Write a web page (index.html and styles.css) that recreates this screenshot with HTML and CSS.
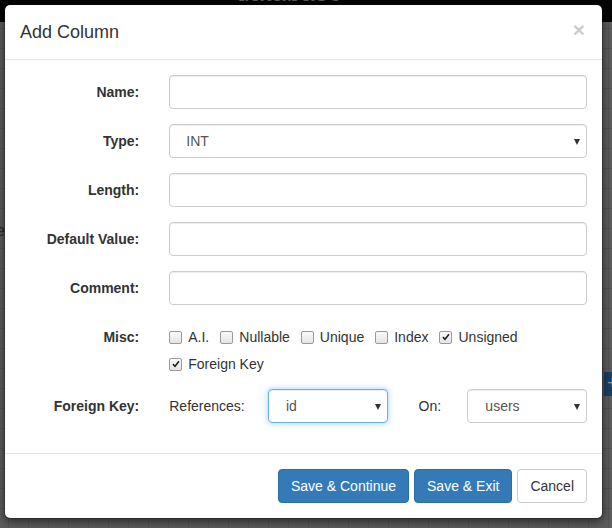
FILE: index.html
```html
<!DOCTYPE html>
<html>
<head>
<meta charset="utf-8">
<link rel="stylesheet" href="styles.css">
</head>
<body>
<div class="page">
  <div class="navbar"><span class="brand">database</span></div>
  <div class="canvas">
    <span class="side-char">e</span>
    <div class="add-btn">+</div>
  </div>
</div>

<div class="modal">
  <div class="modal-header">
    <h4 class="modal-title">Add Column</h4>
    <span class="close">×</span>
  </div>
  <div class="modal-body">
    <div class="form-group">
      <label class="control-label">Name:</label>
      <div class="field"><div class="form-control"></div></div>
    </div>
    <div class="form-group">
      <label class="control-label">Type:</label>
      <div class="field"><div class="form-control select"><span class="val">INT</span><span class="caret"></span></div></div>
    </div>
    <div class="form-group">
      <label class="control-label">Length:</label>
      <div class="field"><div class="form-control"></div></div>
    </div>
    <div class="form-group">
      <label class="control-label">Default Value:</label>
      <div class="field"><div class="form-control"></div></div>
    </div>
    <div class="form-group">
      <label class="control-label">Comment:</label>
      <div class="field"><div class="form-control"></div></div>
    </div>
    <div class="form-group">
      <label class="control-label">Misc:</label>
      <div class="field">
        <div class="check-line">
          <span class="chk"><span class="box"></span>A.I.</span>
          <span class="chk"><span class="box"></span>Nullable</span>
          <span class="chk"><span class="box"></span>Unique</span>
          <span class="chk"><span class="box"></span>Index</span>
          <span class="chk"><span class="box checked"><svg viewBox="0 0 12 12" width="10" height="10"><path d="M2.3 6.2 L4.8 8.7 L9.6 2.6" fill="none" stroke="#222" stroke-width="1.9"/></svg></span>Unsigned</span>
        </div>
        <div class="check-line">
          <span class="chk"><span class="box checked"><svg viewBox="0 0 12 12" width="10" height="10"><path d="M2.3 6.2 L4.8 8.7 L9.6 2.6" fill="none" stroke="#222" stroke-width="1.9"/></svg></span>Foreign Key</span>
        </div>
      </div>
    </div>
    <div class="form-group last">
      <label class="control-label">Foreign Key:</label>
      <div class="field fk">
        <span class="fk-label refs">References:</span>
        <div class="form-control select small focus"><span class="val">id</span><span class="caret"></span></div>
        <span class="fk-label on">On:</span>
        <div class="form-control select small"><span class="val">users</span><span class="caret"></span></div>
      </div>
    </div>
  </div>
  <div class="modal-footer">
    <button class="btn btn-primary">Save &amp; Continue</button>
    <button class="btn btn-primary">Save &amp; Exit</button>
    <button class="btn btn-default">Cancel</button>
  </div>
</div>
</body>
</html>
```

FILE: styles.css
```css
* { box-sizing: border-box; }
html, body { margin: 0; padding: 0; }
body {
  width: 612px;
  height: 528px;
  overflow: hidden;
  font-family: "Liberation Sans", Arial, sans-serif;
  font-size: 14px;
  color: #333;
  position: relative;
  background: #5b5b5b;
}
.page { width: 612px; height: 528px; display: flex; flex-direction: column; }
.navbar {
  height: 22px;
  background: #050505;
  position: relative;
  overflow: hidden;
}
.brand {
  position: absolute;
  left: 236px;
  top: -21px;
  font-size: 24px;
  color: #5a5a5a;
  letter-spacing: 1px;
}
.canvas {
  flex: 1;
  position: relative;
  background-color: #5c5c5c;
  background-image:
    linear-gradient(to right, #535353 1px, transparent 1px),
    linear-gradient(to bottom, #535353 1px, transparent 1px);
  background-size: 20px 20px;
  background-position: 8px 6px;
}
.side-char {
  position: absolute;
  left: -4px;
  top: 200px;
  color: #2a2a2a;
  font-size: 16px;
}
.add-btn {
  position: absolute;
  left: 604px;
  top: 350px;
  width: 40px;
  height: 24px;
  background: #1c3f5e;
  color: #8a9bab;
  font-size: 18px;
  line-height: 22px;
  padding-left: 3px;
}

.modal {
  position: absolute;
  left: 4px;
  top: 4px;
  width: 599px;
  background: #fff;
  border: 1px solid rgba(0,0,0,.2);
  border-radius: 6px;
  box-shadow: 0 3px 9px rgba(0,0,0,.5);
  background-clip: padding-box;
}
.modal-header {
  padding: 15px;
  border-bottom: 1px solid #e5e5e5;
  display: flex;
  justify-content: space-between;
  align-items: center;
  height: 55px;
}
.modal-title {
  margin: 0;
  font-size: 18px;
  font-weight: normal;
  line-height: 24px;
  color: #333;
}
.close {
  font-size: 21px;
  font-weight: bold;
  color: #000;
  opacity: .2;
  line-height: 1;
  margin-top: -6px;
  margin-right: 2px;
}
.modal-body {
  padding: 15px;
}
.form-group {
  display: flex;
  margin: 0 -15px 15px;
}
.form-group.last { margin-bottom: 15px; }
.control-label {
  width: 25%;
  padding: 7px 15px 0;
  text-align: right;
  font-weight: bold;
  line-height: 20px;
}
.field {
  width: 75%;
  padding: 0 15px;
}
.form-control {
  height: 34px;
  border: 1px solid #ccc;
  border-radius: 4px;
  box-shadow: inset 0 1px 1px rgba(0,0,0,.075);
  background: #fff;
  color: #555;
  font-size: 14px;
  line-height: 20px;
  padding: 6px 12px;
}
.select {
  display: flex;
  align-items: center;
  justify-content: space-between;
  padding: 6px 6px 6px 16px;
}
.caret {
  width: 0;
  height: 0;
  border-left: 3.5px solid transparent;
  border-right: 3.5px solid transparent;
  border-top: 6px solid #333;
  margin-top: 1px;
}
.check-line {
  display: flex;
  padding-top: 7px;
  line-height: 20px;
  height: 27px;
}
.chk {
  display: inline-flex;
  align-items: center;
  margin-right: 11px;
}
.box {
  width: 13px;
  height: 13px;
  border: 1px solid #9a9a9a;
  border-radius: 2px;
  background: linear-gradient(#fafafa, #e4e4e4);
  margin-right: 6px;
  display: inline-flex;
  align-items: center;
  justify-content: center;
}
.fk {
  display: flex;
  align-items: center;
}
.fk-label {
  color: #333;
  line-height: 20px;
}
.refs { width: 99px; }
.on { width: 49px; margin-left: 31px; }
.small { width: 120px; }
.small.select { padding-left: 17px; }
.focus {
  border-color: #66afe9;
  box-shadow: inset 0 1px 1px rgba(0,0,0,.075), 0 0 6px rgba(102,175,233,.6);
}
.modal-footer {
  padding: 15px;
  border-top: 1px solid #e5e5e5;
  display: flex;
  justify-content: flex-end;
  gap: 5px;
}
.btn {
  font-family: "Liberation Sans", Arial, sans-serif;
  font-size: 14px;
  line-height: 20px;
  padding: 6px 12px;
  border-radius: 4px;
  border: 1px solid transparent;
  height: 34px;
}
.btn-primary {
  background: #337ab7;
  border-color: #2e6da4;
  color: #fff;
}
.btn-default {
  background: #fff;
  border-color: #ccc;
  color: #333;
}
```
